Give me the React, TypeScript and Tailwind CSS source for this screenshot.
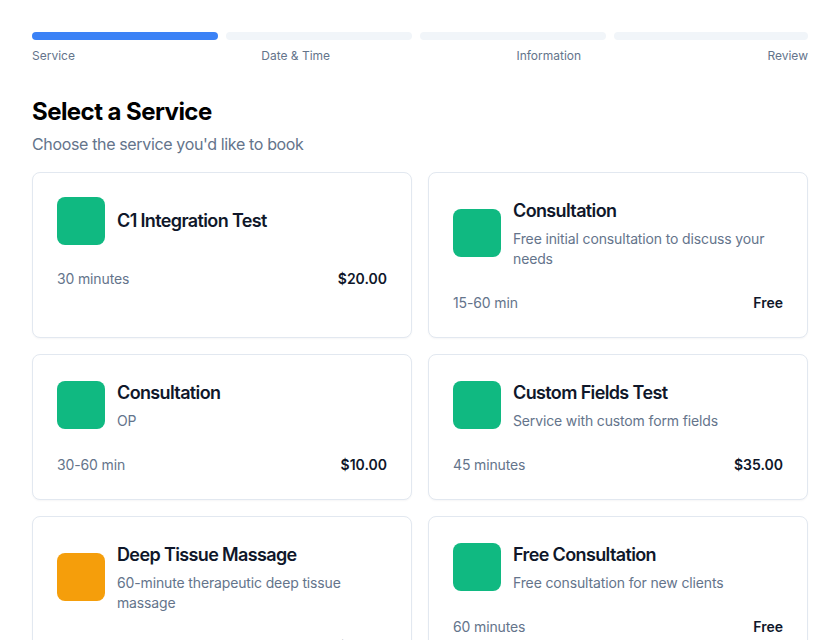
import React from 'react';

type Service = {
  name: string;
  description?: string;
  duration: string;
  price: string;
  color: string;
};

const steps = ['Service', 'Date & Time', 'Information', 'Review'];

const services: Service[] = [
  { name: 'C1 Integration Test', duration: '30 minutes', price: '$20.00', color: 'bg-[#10b981]' },
  {
    name: 'Consultation',
    description: 'Free initial consultation to discuss your needs',
    duration: '15-60 min',
    price: 'Free',
    color: 'bg-[#10b981]',
  },
  { name: 'Consultation', description: 'OP', duration: '30-60 min', price: '$10.00', color: 'bg-[#10b981]' },
  {
    name: 'Custom Fields Test',
    description: 'Service with custom form fields',
    duration: '45 minutes',
    price: '$35.00',
    color: 'bg-[#10b981]',
  },
  {
    name: 'Deep Tissue Massage',
    description: '60-minute therapeutic deep tissue massage',
    duration: '60 minutes',
    price: '$85.00',
    color: 'bg-[#f59e0b]',
  },
  {
    name: 'Free Consultation',
    description: 'Free consultation for new clients',
    duration: '60 minutes',
    price: 'Free',
    color: 'bg-[#10b981]',
  },
];

function ServiceCard({ service }: { service: Service }) {
  return (
    <div className="bg-white border border-[#e2e8f0] rounded-lg p-6 shadow-[0_1px_2px_rgba(15,23,42,0.04)] cursor-pointer">
      {/* Header */}
      <div className="flex items-center gap-3">
        <div className={`w-12 h-12 rounded-lg flex-shrink-0 ${service.color}`} />
        <div className="flex-1">
          <h3 className="text-lg leading-7 font-semibold tracking-[-0.035em] text-[#0f172a]">{service.name}</h3>
          {service.description && (
            <p className="text-sm leading-5 tracking-[-0.01em] text-[#64748b] mt-1">{service.description}</p>
          )}
        </div>
      </div>

      {/* Footer */}
      <div className="flex items-center justify-between mt-6 text-sm leading-5">
        <span className="text-[#64748b] tracking-[-0.01em]">{service.duration}</span>
        <span className="font-semibold text-[#0f172a]">{service.price}</span>
      </div>
    </div>
  );
}

export default function App() {
  return (
    <div className="min-h-screen bg-white px-8 pt-8 font-['Inter','Liberation_Sans',sans-serif]">
      {/* Progress */}
      <div className="flex">
        {steps.map((step, i) => (
          <div key={step} className={`w-1/4 flex-none ${i < steps.length - 1 ? 'pr-2' : ''}`}>
            <div className={`h-2 rounded-full ${i === 0 ? 'bg-[#3b82f6]' : 'bg-[#f1f5f9]'}`} />
          </div>
        ))}
      </div>
      <div className="flex justify-between mt-2 text-xs leading-4 text-[#64748b]">
        {steps.map(step => (
          <span key={step}>{step}</span>
        ))}
      </div>

      {/* Title */}
      <h1 className="mt-8 text-2xl leading-8 font-bold tracking-[-0.023em] text-black">Select a Service</h1>
      <p className="mt-1 text-base leading-6 tracking-[-0.022em] text-[#64748b]">Choose the service you'd like to book</p>

      {/* Services */}
      <div className="grid grid-cols-2 gap-4 mt-4 pb-8">
        {services.map((s, i) => (
          <ServiceCard key={i} service={s} />
        ))}
      </div>
    </div>
  );
}
